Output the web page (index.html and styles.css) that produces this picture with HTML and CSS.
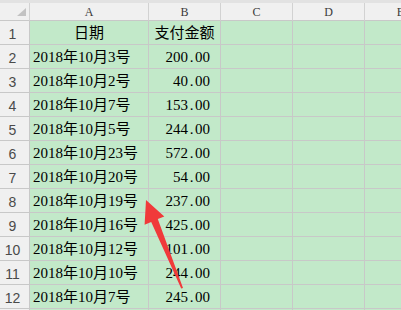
FILE: index.html
```html
<!DOCTYPE html>
<html>
<head>
<meta charset="utf-8">
<link rel="stylesheet" href="styles.css">
</head>
<body>
<div class="topbar"></div>
<div class="sheet">
  <div class="hd corner"><span class="tri"></span></div>
  <div class="hd col">A</div>
  <div class="hd col">B</div>
  <div class="hd col">C</div>
  <div class="hd col">D</div>
  <div class="hd col last">E</div>

  <div class="rh">1</div><div class="c ctr">日期</div><div class="c ctr">支付金额</div><div class="c"></div><div class="c"></div><div class="c"></div>
  <div class="rh">2</div><div class="c">2018年10月3号</div><div class="c num">200<span class="dot">.</span>00</div><div class="c"></div><div class="c"></div><div class="c"></div>
  <div class="rh">3</div><div class="c">2018年10月2号</div><div class="c num">40<span class="dot">.</span>00</div><div class="c"></div><div class="c"></div><div class="c"></div>
  <div class="rh">4</div><div class="c">2018年10月7号</div><div class="c num">153<span class="dot">.</span>00</div><div class="c"></div><div class="c"></div><div class="c"></div>
  <div class="rh">5</div><div class="c">2018年10月5号</div><div class="c num">244<span class="dot">.</span>00</div><div class="c"></div><div class="c"></div><div class="c"></div>
  <div class="rh">6</div><div class="c">2018年10月23号</div><div class="c num">572<span class="dot">.</span>00</div><div class="c"></div><div class="c"></div><div class="c"></div>
  <div class="rh">7</div><div class="c">2018年10月20号</div><div class="c num">54<span class="dot">.</span>00</div><div class="c"></div><div class="c"></div><div class="c"></div>
  <div class="rh">8</div><div class="c">2018年10月19号</div><div class="c num">237<span class="dot">.</span>00</div><div class="c"></div><div class="c"></div><div class="c"></div>
  <div class="rh">9</div><div class="c">2018年10月16号</div><div class="c num">425<span class="dot">.</span>00</div><div class="c"></div><div class="c"></div><div class="c"></div>
  <div class="rh">10</div><div class="c">2018年10月12号</div><div class="c num">101<span class="dot">.</span>00</div><div class="c"></div><div class="c"></div><div class="c"></div>
  <div class="rh">11</div><div class="c">2018年10月10号</div><div class="c num">244<span class="dot">.</span>00</div><div class="c"></div><div class="c"></div><div class="c"></div>
  <div class="rh">12</div><div class="c">2018年10月7号</div><div class="c num">245<span class="dot">.</span>00</div><div class="c"></div><div class="c"></div><div class="c"></div>
  <div class="rh"></div><div class="c"></div><div class="c"></div><div class="c"></div><div class="c"></div><div class="c"></div>
</div>
<svg class="arrow" width="401" height="310" viewBox="0 0 401 310">
  <polygon points="146,200 164.3,216.5 157.8,219 183,288 181.2,288.6 151.2,222 144.6,224.8" fill="#f03a3a"/>
</svg>
</body>
</html>
```
FILE: styles.css
```css
html, body {
  margin: 0;
  padding: 0;
  background: #ffffff;
  width: 401px;
  height: 310px;
  overflow: hidden;
}
body {
  position: relative;
}
.topbar {
  height: 3px;
  background: #e2e2e2;
}
.sheet {
  display: grid;
  grid-template-columns: 30px 119px 72px 72px 72px 72px;
  grid-template-rows: 18px repeat(13, 24px);
}
.sheet > div {
  box-sizing: border-box;
  border-right: 1px solid #c8c8c8;
  border-bottom: 1px solid #c8c8c8;
}
.hd {
  background: #f0f0f0;
  font-family: "Liberation Serif", serif;
  font-size: 12px;
  color: #3a3a3a;
  display: flex;
  align-items: center;
  justify-content: center;
  padding-top: 2px;
  border-right-color: #d2d2d2 !important;
}
.corner {
  position: relative;
}
.tri {
  position: absolute;
  right: 3px;
  top: 5px;
  width: 0;
  height: 0;
  border-left: 9px solid transparent;
  border-bottom: 8px solid #c2c2c2;
}
.rh {
  background: #f0f0f0;
  font-family: "Liberation Sans", sans-serif;
  font-size: 14px;
  color: #4a4a4a;
  display: flex;
  align-items: center;
  justify-content: center;
  padding-right: 4px;
  padding-top: 2px;
}
.c {
  background: #c2e9c9;
  font-family: "Liberation Serif", "Noto Sans CJK SC", serif;
  font-size: 15px;
  color: #000;
  display: flex;
  align-items: center;
  padding-left: 3px;
  padding-top: 2px;
  line-height: 1;
  white-space: nowrap;
  overflow: hidden;
}
.ctr {
  justify-content: center;
  padding-left: 0;
}
.num {
  justify-content: flex-end;
  padding-right: 10px;
}
.dot {
  display: inline-block;
  width: 7px;
  text-align: center;
}
.arrow {
  position: absolute;
  left: 0;
  top: 0;
  pointer-events: none;
}
```
